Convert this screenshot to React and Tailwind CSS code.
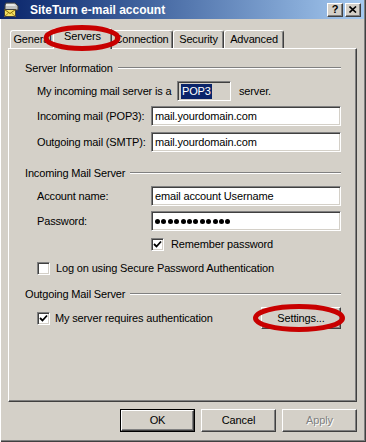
import React from "react";

const raised =
  "bg-[#d4d0c8] border border-t-white border-l-white border-r-[#404040] border-b-[#404040] shadow-[inset_-1px_-1px_0_#808080]";
const sunken =
  "border border-t-[#808080] border-l-[#808080] border-r-white border-b-white shadow-[inset_1px_1px_0_#404040,inset_-1px_-1px_0_#d4d0c8]";

const TitleIcon = () => (
  <svg width="17" height="17" viewBox="0 0 17 17">
    <path d="M3 2 L12 2 L15 5 L15 9 L2 9 L2 4 Z" fill="#c0c0c0" stroke="#404040" strokeWidth="1" />
    <path d="M3 3 L11 3 L13 5 L3 5 Z" fill="#e8e8e8" />
    <rect x="1.5" y="8.5" width="11" height="7" fill="#f4e060" stroke="#404040" strokeWidth="1" />
    <path d="M1.5 8.5 L7 12.5 L12.5 8.5" fill="none" stroke="#806000" strokeWidth="1" />
    <path d="M1.5 15.5 L5.5 12 M12.5 15.5 L8.5 12" fill="none" stroke="#a08020" strokeWidth="1" />
  </svg>
);

const Check = ({ checked }) => (
  <div className={`w-[13px] h-[13px] bg-white shrink-0 flex items-center justify-center ${sunken}`}>
    {checked && (
      <svg width="9" height="9" viewBox="0 0 9 9">
        <path d="M1 4 L3.5 6.5 L8 1.5" fill="none" stroke="#000" strokeWidth="1.8" />
      </svg>
    )}
  </div>
);

const GroupHeader = ({ label, mt }) => (
  <div className={`flex items-center h-[14px] pl-[16px] pr-[15px] ${mt}`}>
    <span>{label}</span>
    <div className="flex-1 ml-[5px] h-[2px] border-t border-t-[#808080] border-b border-b-white" />
  </div>
);

const TextRow = ({ label, value, mt, children }) => (
  <div className={`flex items-center h-[20px] pl-[28px] pr-[15px] ${mt}`}>
    <span className="w-[114px] shrink-0">{label}</span>
    <div className={`flex-1 h-[20px] bg-white flex items-center pl-[3px] ${sunken}`}>
      {children || value}
    </div>
  </div>
);

const tabs = [
  { name: "General", w: "w-[45px]" },
  { name: "Servers", w: "w-[59px]", active: true },
  { name: "Connection", w: "w-[63px]" },
  { name: "Security", w: "w-[51px]" },
  { name: "Advanced", w: "w-[60px]" },
];

const Tab = ({ name, w, active }) =>
  active ? (
    <div
      className={`${w} -mx-[2px] h-[21px] -mb-[1px] relative z-10 bg-[#d4d0c8] border-t border-l border-t-white border-l-white border-r border-r-[#404040] rounded-t-[3px] shadow-[inset_-1px_0_0_#808080] flex items-start justify-center pt-[2px]`}
    >
      {name}
    </div>
  ) : (
    <div
      className={`${w} h-[18px] bg-[#d4d0c8] border-t border-l border-t-white border-l-white border-r border-r-[#404040] rounded-t-[3px] shadow-[inset_-1px_0_0_#808080] flex items-center justify-center pb-[1px] overflow-hidden whitespace-nowrap`}
    >
      {name}
    </div>
  );

const Button = ({ children, def, disabled, w = "w-[75px]", h = "h-[23px]" }) => (
  <div className={`${w} ${h} ${def ? "border border-black" : ""}`}>
    <div
      className={`w-full h-full flex items-center justify-center ${raised} ${
        disabled ? "text-[#808080] [text-shadow:1px_1px_0_#fff]" : ""
      }`}
    >
      {children}
    </div>
  </div>
);

export default function App() {
  return (
    <div className="w-[366px] h-[442px] bg-[#d4d0c8] relative overflow-hidden flex flex-col font-['Liberation_Sans',Arial,sans-serif] text-[11px] tracking-[-0.15px] text-black leading-none shadow-[inset_1px_0_0_#fff,inset_-1px_-1px_0_#404040,inset_-2px_-2px_0_#808080]">
      {/* title bar */}
      <div className="h-[19px] mr-[2px] flex items-center pl-[3px] pr-[3px] bg-gradient-to-r from-[#0a246a] to-[#a6caf0]">
        <TitleIcon />
        <span className="ml-[10px] text-white font-bold text-[12px] tracking-normal">SiteTurn e-mail account</span>
        <div className="ml-auto flex gap-[2px]">
          <div className={`w-[16px] h-[14px] flex items-center justify-center font-bold text-[11px] ${raised}`}>?</div>
          <div className={`w-[16px] h-[14px] flex items-center justify-center ${raised}`}>
            <svg width="8" height="7" viewBox="0 0 8 7">
              <path d="M0.5 0.5 L7 6.5 M7 0.5 L0.5 6.5" stroke="#000" strokeWidth="1.6" />
            </svg>
          </div>
        </div>
      </div>

      {/* tabs */}
      <div className="mt-[9px] h-[20px] pl-[10px] flex items-end">
        {tabs.map((t) => (
          <Tab key={t.name} {...t} />
        ))}
      </div>

      {/* panel */}
      <div className="ml-[8px] w-[349px] h-[354px] border-t border-l border-t-white border-l-white border-r border-b border-r-[#404040] border-b-[#404040] shadow-[inset_-1px_-1px_0_#808080] flex flex-col">
        <GroupHeader label="Server Information" mt="mt-[12px]" />
        <div className="flex items-center h-[20px] pl-[28px] mt-[6px]">
          <span className="w-[140px] shrink-0 whitespace-nowrap">My incoming mail server is a</span>
          <div className={`w-[54px] h-[20px] flex items-center pl-[3px] ${sunken}`}>
            <span className="bg-[#0a246a] text-white px-[1px] py-[2px]">POP3</span>
          </div>
          <span className="ml-[8px]">server.</span>
        </div>
        <TextRow label="Incoming mail (POP3):" value="mail.yourdomain.com" mt="mt-[5px]" />
        <TextRow label="Outgoing mail (SMTP):" value="mail.yourdomain.com" mt="mt-[6px]" />

        <GroupHeader label="Incoming Mail Server" mt="mt-[14px]" />
        <TextRow label="Account name:" value="email account Username" mt="mt-[6px]" />
        <TextRow label="Password:" mt="mt-[5px]">
          <div className="flex gap-[1.4px]">
            {Array.from({ length: 12 }).map((_, i) => (
              <span key={i} className="w-[5px] h-[5px] rounded-full bg-black" />
            ))}
          </div>
        </TextRow>
        <div className="flex items-center h-[13px] pl-[142px] mt-[7px]">
          <Check checked />
          <span className="ml-[7px]">Remember password</span>
        </div>
        <div className="flex items-center h-[13px] pl-[28px] mt-[11px]">
          <Check />
          <span className="ml-[6px]">Log on using Secure Password Authentication</span>
        </div>

        <GroupHeader label="Outgoing Mail Server" mt="mt-[12px]" />
        <div className="flex items-center h-[22px] pl-[28px] pr-[15px] mt-[6px]">
          <Check checked />
          <span className="ml-[5px]">My server requires authentication</span>
          <div className="ml-auto">
            <Button w="w-[80px]" h="h-[22px]">Settings...</Button>
          </div>
        </div>
      </div>

      {/* buttons */}
      <div className="mt-[7px] flex justify-end gap-[6px] pr-[9px]">
        <Button def>OK</Button>
        <Button>Cancel</Button>
        <Button disabled>Apply</Button>
      </div>

      {/* red annotation ellipses */}
      <svg className="absolute left-0 top-0 pointer-events-none z-20" width="366" height="442">
        <ellipse cx="82" cy="38" rx="36" ry="10.5" fill="none" stroke="#c80000" strokeWidth="5" />
        <ellipse cx="299" cy="318" rx="43.5" ry="11.5" fill="none" stroke="#c80000" strokeWidth="5" />
      </svg>
    </div>
  );
}
